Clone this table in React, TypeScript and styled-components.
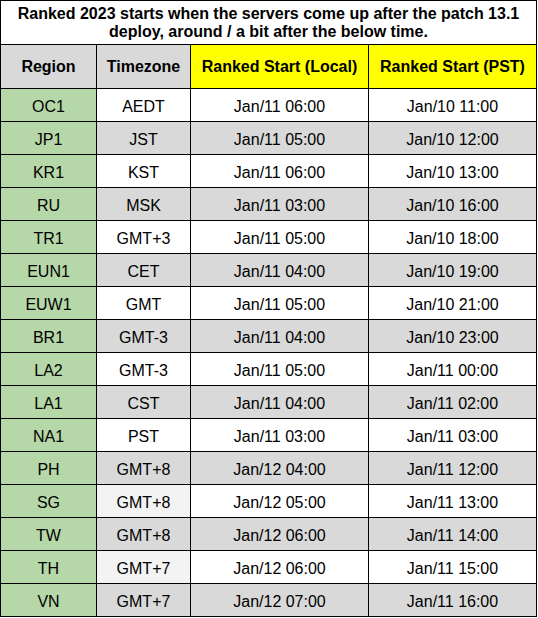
import React from "react";
import styled, { createGlobalStyle } from "styled-components";

const Global = createGlobalStyle`
  html, body { margin: 0; padding: 0; background: #fff; }
  body { font-family: "Liberation Sans", Arial, sans-serif; color: #000; }
`;

const Sheet = styled.div`
  display: grid;
  grid-template-columns: 95px 93px 177px 167px;
  grid-template-rows: 43px 43px repeat(16, 32px);
  gap: 1px;
  padding: 1px;
  background: #000;
  width: max-content;
`;

const Title = styled.div`
  grid-column: 1 / -1;
  background: #fff;
  font-weight: bold;
  font-size: 16px;
  line-height: 18px;
  text-align: center;
  display: flex;
  align-items: center;
  justify-content: center;
  padding: 0 6px;
`;

type Tone = "green" | "gray" | "yellow" | "white" | "light";
const tones: Record<Tone, string> = {
  green: "#b6d7a8",
  gray: "#d9d9d9",
  yellow: "#ffff00",
  white: "#ffffff",
  light: "#f3f3f3",
};

const Cell = styled.div<{ $tone: Tone; $bold?: boolean }>`
  background: ${(p) => tones[p.$tone]};
  font-size: 16px;
  font-weight: ${(p) => (p.$bold ? "bold" : "normal")};
  padding-top: ${(p) => (p.$bold ? "1px" : "4px")};
  box-sizing: border-box;
  display: flex;
  align-items: center;
  justify-content: center;
  white-space: nowrap;
`;

const rows: [string, string, string, string, boolean?][] = [
  ["OC1", "AEDT", "Jan/11 06:00", "Jan/10 11:00"],
  ["JP1", "JST", "Jan/11 05:00", "Jan/10 12:00"],
  ["KR1", "KST", "Jan/11 06:00", "Jan/10 13:00"],
  ["RU", "MSK", "Jan/11 03:00", "Jan/10 16:00"],
  ["TR1", "GMT+3", "Jan/11 05:00", "Jan/10 18:00"],
  ["EUN1", "CET", "Jan/11 04:00", "Jan/10 19:00"],
  ["EUW1", "GMT", "Jan/11 05:00", "Jan/10 21:00"],
  ["BR1", "GMT-3", "Jan/11 04:00", "Jan/10 23:00"],
  ["LA2", "GMT-3", "Jan/11 05:00", "Jan/11 00:00"],
  ["LA1", "CST", "Jan/11 04:00", "Jan/11 02:00"],
  ["NA1", "PST", "Jan/11 03:00", "Jan/11 03:00"],
  ["PH", "GMT+8", "Jan/12 04:00", "Jan/11 12:00"],
  ["SG", "GMT+8", "Jan/12 05:00", "Jan/11 13:00", true],
  ["TW", "GMT+8", "Jan/12 06:00", "Jan/11 14:00"],
  ["TH", "GMT+7", "Jan/12 06:00", "Jan/11 15:00", true],
  ["VN", "GMT+7", "Jan/12 07:00", "Jan/11 16:00"],
];

export default function App() {
  return (
    <>
      <Global />
      <Sheet>
        <Title>
          Ranked 2023 starts when the servers come up after the patch 13.1 deploy, around / a bit after the below time.
        </Title>
        <Cell $tone="gray" $bold>Region</Cell>
        <Cell $tone="gray" $bold>Timezone</Cell>
        <Cell $tone="yellow" $bold>Ranked Start (Local)</Cell>
        <Cell $tone="yellow" $bold>Ranked Start (PST)</Cell>
        {rows.map(([region, tz, local, pst, lightTz], i) => {
          const base: Tone = i % 2 === 0 ? "white" : "gray";
          return (
            <React.Fragment key={region}>
              <Cell $tone="green">{region}</Cell>
              <Cell $tone={lightTz ? "light" : base}>{tz}</Cell>
              <Cell $tone={base}>{local}</Cell>
              <Cell $tone={base}>{pst}</Cell>
            </React.Fragment>
          );
        })}
      </Sheet>
    </>
  );
}
